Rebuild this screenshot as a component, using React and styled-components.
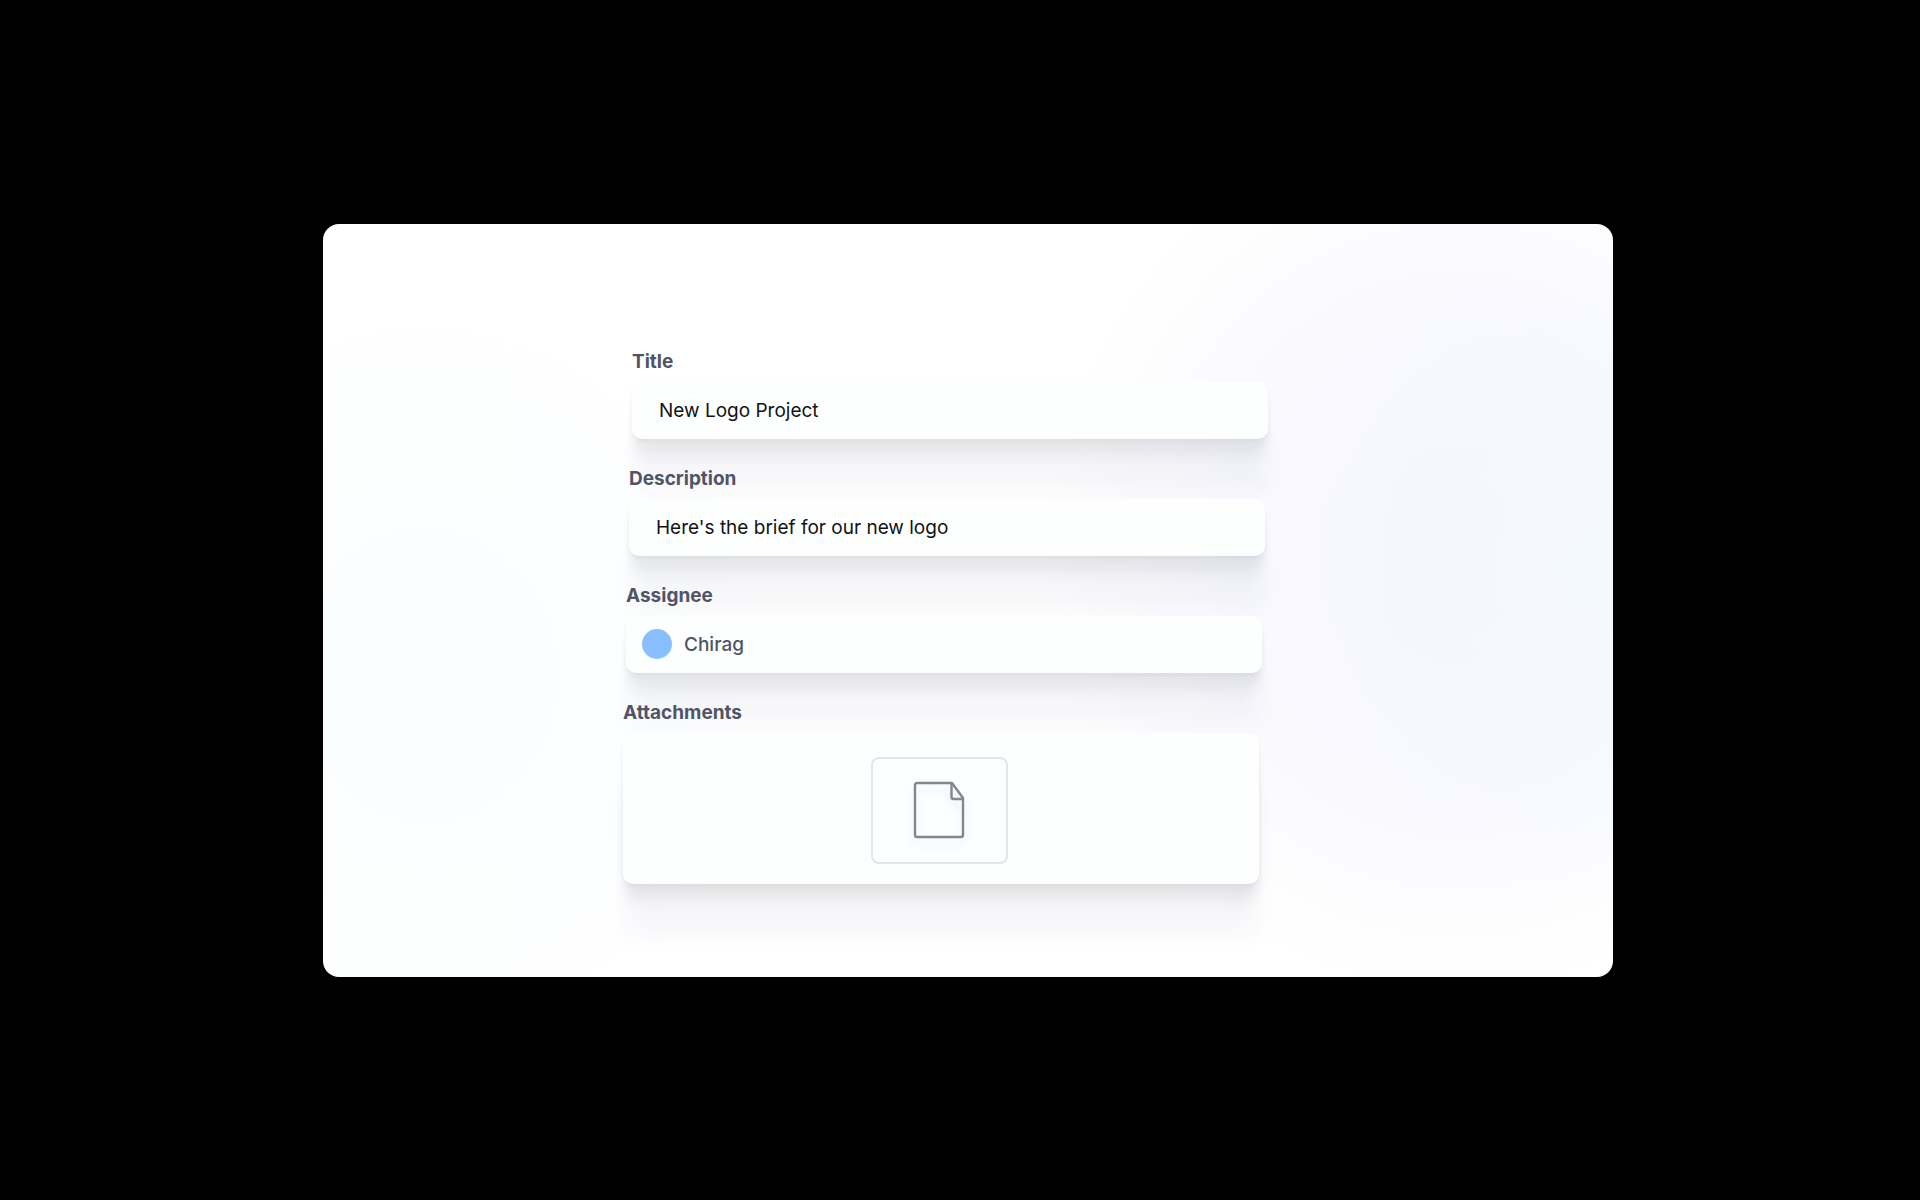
import React, { useState } from "react";
import styled, { createGlobalStyle } from "styled-components";

const Colors = {
    black: "#000000",
    white: "#ffffff",
    field: "#fdffff",
    label: "#505566",
    text: "#121214",
    avatar: "#8abfff",
    outline: "#e4e4ec",
    icon: "#85878f",
}

export default function App() {

    const [title, setTitle] = useState("New Logo Project")

    const [description, setDescription] = useState("Here's the brief for our new logo")

    return (
        <PageWrapper>
            <GlobalStyle />
            <Card>
                <Form onSubmit={(e) => e.preventDefault()}>
                    <Field $step={0}>
                        <FieldLabel htmlFor="title">Title</FieldLabel>
                        <TextInput
                            id="title"
                            type="text"
                            value={title}
                            onChange={(e) => setTitle(e.target.value)}
                        />
                    </Field>
                    <Field $step={1}>
                        <FieldLabel htmlFor="description">Description</FieldLabel>
                        <TextInput
                            id="description"
                            type="text"
                            value={description}
                            onChange={(e) => setDescription(e.target.value)}
                        />
                    </Field>
                    <Field $step={2}>
                        <FieldLabel htmlFor="assignee">Assignee</FieldLabel>
                        <AssigneeButton id="assignee" type="button">
                            <Avatar />
                            Chirag
                        </AssigneeButton>
                    </Field>
                    <Field $step={3}>
                        <FieldLabel htmlFor="attachments">Attachments</FieldLabel>
                        <AttachmentsBox>
                            <AttachmentButton id="attachments" type="button">
                                <FileIcon />
                            </AttachmentButton>
                        </AttachmentsBox>
                    </Field>
                </Form>
            </Card>
        </PageWrapper>
    )
}

function FileIcon() {
    return (
        <FileSvg viewBox="0 0 52 58" aria-hidden="true">
            <path d="M39 2H4a2 2 0 0 0-2 2v50a2 2 0 0 0 2 2h44a2 2 0 0 0 2-2V17Z" />
            <path d="M38.500 2v14a2 2 0 0 0 2 2H50" />
        </FileSvg>
    )
}

const GlobalStyle = createGlobalStyle`
    * {
        box-sizing: border-box;
    }

    body {
        margin: 0;
        background: ${Colors.black};
    }

    button, input {
        font: inherit;
    }
`

const PageWrapper = styled.main`
    display: flex;
    align-items: center;
    justify-content: center;
    min-height: 100vh;
    padding-left: 16px;
    font-family: Inter, "Liberation Sans", sans-serif;
`

const Card = styled.section`
    display: flex;
    justify-content: center;
    width: 100%;
    max-width: 1290px;
    padding: 125px 36px 93px 0;
    border-radius: 16px;
    overflow: hidden;
    background:
        radial-gradient(ellipse 20% 44% at 98% 46%, rgba(242, 248, 255, 0.7) 0%, rgba(242, 248, 255, 0) 100%),
        radial-gradient(ellipse 32% 58% at 88% 44%, #f6f6fe 0%, #f9f9fe 55%, rgba(251, 251, 255, 0) 100%),
        radial-gradient(ellipse 26% 50% at 8% 60%, #f9fdff 0%, rgba(249, 253, 255, 0) 100%),
        ${Colors.white};
`

const Form = styled.form`
    display: flex;
    flex-direction: column;
    gap: 27px;
    width: 636px;
    max-width: 100%;
`

//each field sits a bit further left than the one above it
const Field = styled.div`
    display: flex;
    flex-direction: column;
    gap: 7px;
    margin-left: ${(props) => props.$step * -3}px;
    margin-right: ${(props) => props.$step * 3}px;
`

const FieldLabel = styled.label`
    position: relative;
    z-index: 1;
    align-self: flex-start;
    color: ${Colors.label};
    font-size: 19px;
    font-weight: 700;
    line-height: 26px;
`

const fieldSurface = `
    position: relative;
    width: 100%;
    border: none;
    border-radius: 10px;
    background: ${Colors.field};
    box-shadow:
        0 2px 4px rgba(20, 20, 25, 0.04),
        0 10px 10px -1px rgba(30, 30, 35, 0.04),
        0 22px 12px -2px rgba(30, 30, 35, 0.045),
        0 54px 24px -2px rgba(60, 45, 100, 0.04);
`

const TextInput = styled.input`
    ${fieldSurface}
    height: 57px;
    padding: 0 27px;
    color: ${Colors.text};
    font-size: 19px;
    outline: none;
`

const AssigneeButton = styled.button`
    ${fieldSurface}
    display: flex;
    align-items: center;
    gap: 12px;
    height: 57px;
    padding: 0 16px;
    color: ${Colors.label};
    font-size: 19px;
    font-weight: 500;
    text-align: left;
`

const Avatar = styled.span`
    width: 30px;
    height: 30px;
    border-radius: 50%;
    background: ${Colors.avatar};
`

const AttachmentsBox = styled.div`
    ${fieldSurface}
    display: flex;
    justify-content: center;
    padding: 24px 20px 20px 16px;
`

const AttachmentButton = styled.button`
    display: flex;
    align-items: center;
    justify-content: center;
    width: 137px;
    height: 107px;
    padding: 0;
    border: 2px solid ${Colors.outline};
    border-radius: 8px;
    background: #fdfeff;
`

const FileSvg = styled.svg`
    width: 52px;
    height: 58px;
    fill: none;
    stroke: ${Colors.icon};
    stroke-width: 2.4;
    stroke-linejoin: round;
    filter: drop-shadow(0 6px 5px rgba(80, 80, 140, 0.1));
`
